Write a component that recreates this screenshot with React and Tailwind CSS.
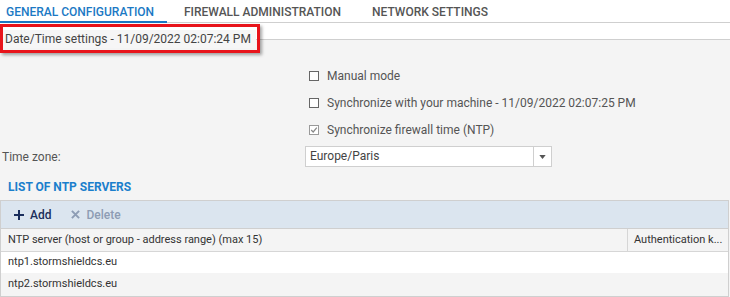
import React from 'react';

const font = { fontFamily: 'Roboto, "Liberation Sans", sans-serif' };

const Box = ({ checked }) => (
  <span className={`w-[10px] h-[10px] border flex items-center justify-center bg-white ${checked ? 'border-[#9a9a9a]' : 'border-[#666]'}`}>
    {checked && (
      <svg viewBox="0 0 10 10" className="w-[8px] h-[8px]">
        <path d="M1.5 5 L4 7.5 L8.5 2" fill="none" stroke="#888" strokeWidth="1.5" />
      </svg>
    )}
  </span>
);

const Option = ({ label, checked }) => (
  <div className="h-[27px] flex items-center gap-[8px] pl-[309px] text-[12px] text-[#555]">
    <Box checked={checked} />
    <span>{label}</span>
  </div>
);

export default function App() {
  return (
    <div className="relative w-[730px] h-[297px] overflow-hidden bg-[#f4f4f4]" style={font}>
      {/* tabs */}
      <div className="h-[23px] flex bg-white border-b border-[#cfcfcf] text-[12px] font-medium text-[#555]">
        <div className="w-[167px] pl-[6px] pt-[3px] text-[#1b79c4] border-b-2 border-[#1b79c4] -mb-px">GENERAL CONFIGURATION</div>
        <div className="pl-[17px] pt-[3px]">FIREWALL ADMINISTRATION</div>
        <div className="pl-[31px] pt-[3px]">NETWORK SETTINGS</div>
      </div>

      {/* legend */}
      <div className="h-[32px] flex items-center bg-[linear-gradient(to_bottom,#ffffff_16px,#f4f4f4_16px)]">
        <span className="px-[5px] text-[12px] text-[#444] bg-[#f6f6f6] whitespace-nowrap">Date/Time settings - 11/09/2022 02:07:24 PM</span>
        <div className="flex-1 h-px bg-[#cfcfcf]" />
      </div>

      <div className="pt-[7px]">
        <Option label="Manual mode" />
        <Option label="Synchronize with your machine - 11/09/2022 02:07:25 PM" />
        <Option label="Synchronize firewall time (NTP)" checked />
      </div>

      <div className="mt-[3px] flex items-center h-[21px] text-[12px] text-[#555]">
        <span className="w-[305px] pl-[2px]">Time zone:</span>
        <div className="w-[247px] h-[21px] flex border border-[#cfcfcf] bg-white">
          <span className="flex-1 pl-[4px] leading-[19px] text-[#444]">Europe/Paris</span>
          <span className="w-[18px] border-l border-[#cfcfcf] flex items-center justify-center">
            <svg viewBox="0 0 8 5" className="w-[7px] h-[4px]"><path d="M0 0 H8 L4 5 Z" fill="#555" /></svg>
          </span>
        </div>
      </div>

      <div className="mt-[11px] pl-[8px] h-[16px] text-[12px] font-bold text-[#1b7fcc]">LIST OF NTP SERVERS</div>

      <div className="mt-[6px] mr-[1px] border border-[#cfcfcf]">
        <div className="h-[27px] flex items-center gap-[20px] pl-[13px] bg-[#dbe5ef] text-[12px] font-medium">
          <span className="flex items-center gap-[6px] text-[#1a2e5c]">
            <svg viewBox="0 0 10 10" className="w-[10px] h-[10px]"><path d="M5 0 V10 M0 5 H10" stroke="#1a2e5c" strokeWidth="2" /></svg>
            Add
          </span>
          <span className="flex items-center gap-[6px] text-[#8d9cb4]">
            <svg viewBox="0 0 10 10" className="w-[9px] h-[9px]"><path d="M1 1 L9 9 M9 1 L1 9" stroke="#8d9cb4" strokeWidth="2.2" /></svg>
            Delete
          </span>
        </div>
        <div className="h-[23px] flex border-t border-[#cfcfcf] bg-[#f4f4f4] text-[11px] text-[#333] whitespace-nowrap">
          <div className="w-[626px] pl-[7px] flex items-center">NTP server (host or group - address range) (max 15)</div>
          <div className="flex-1 min-w-0 overflow-hidden border-l border-[#d6d6d6] pl-[6px] flex items-center">Authentication k...</div>
        </div>
        <div className="h-[22px] flex items-center pl-[7px] bg-white border-t border-[#d6d6d6] text-[11px] text-[#333]">ntp1.stormshieldcs.eu</div>
        <div className="h-[23px] flex items-center pl-[7px] bg-[#f4f4f4] text-[11px] text-[#333]">ntp2.stormshieldcs.eu</div>
      </div>

      {/* annotation */}
      <div className="absolute left-0 top-[24px] w-[260px] h-[29px] border-[3px] border-[#e8141b] shadow-[2px_2px_3px_rgba(0,0,0,0.35)]" />
    </div>
  );
}
